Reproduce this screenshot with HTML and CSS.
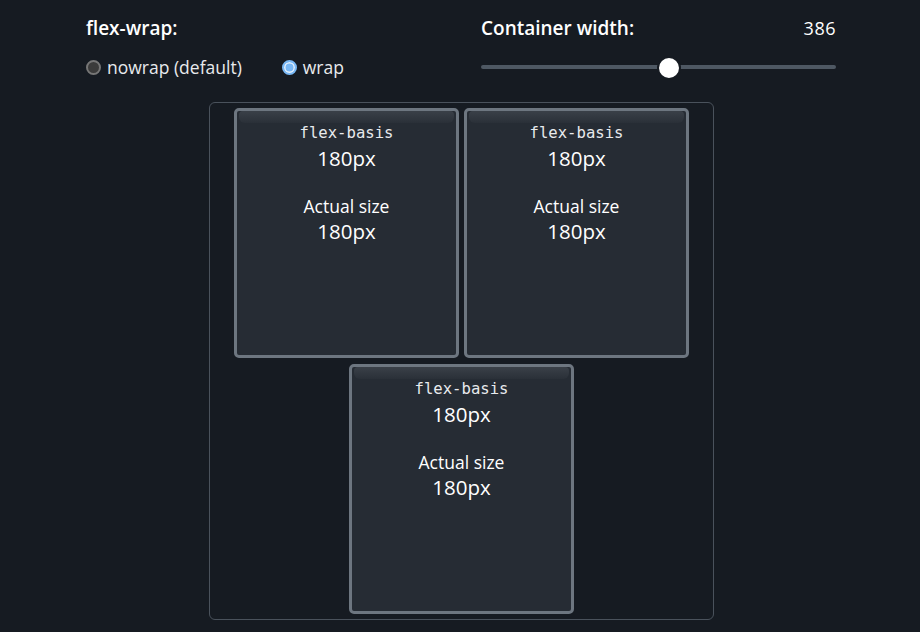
FILE: index.html
```html
<!DOCTYPE html>
<html>
<head>
<meta charset="utf-8">
<link rel="stylesheet" href="styles.css">
</head>
<body>
<div class="page">
  <div class="controls">
    <div class="control">
      <div class="label">flex-wrap:</div>
      <div class="radios">
        <label class="radio"><span class="dot"></span>nowrap (default)</label>
        <label class="radio"><span class="dot checked"></span>wrap</label>
      </div>
    </div>
    <div class="control">
      <div class="label-row"><span class="label">Container width:</span><span class="value">386</span></div>
      <div class="slider">
        <div class="track"></div>
        <div class="thumb" style="left: 53%"></div>
      </div>
    </div>
  </div>
  <div class="container">
    <div class="item"><div class="shine"></div>
      <div class="mono">flex-basis</div><div class="num">180px</div>
      <div class="cap">Actual size</div><div class="num second">180px</div>
    </div>
    <div class="item"><div class="shine"></div>
      <div class="mono">flex-basis</div><div class="num">180px</div>
      <div class="cap">Actual size</div><div class="num second">180px</div>
    </div>
    <div class="item"><div class="shine"></div>
      <div class="mono">flex-basis</div><div class="num">180px</div>
      <div class="cap">Actual size</div><div class="num second">180px</div>
    </div>
  </div>
</div>
</body>
</html>
```
FILE: styles.css
```css
html, body {
  margin: 0;
  padding: 0;
  background: #161b22;
  color: #ffffff;
  font-family: "Open Sans", Lato, sans-serif;
}
.page {
  width: 750px;
  margin-left: 86px;
  padding-top: 16px;
}
.controls {
  display: grid;
  grid-template-columns: 1fr 1fr;
  column-gap: 40px;
}
.label {
  font-size: 19px;
  font-weight: 600;
  line-height: 24px;
}
.label-row {
  display: flex;
  justify-content: space-between;
  align-items: center;
}
.value {
  font-size: 18px;
  letter-spacing: 0.5px;
}
.radios {
  display: flex;
  gap: 40px;
  margin-top: 15px;
}
.radio {
  display: flex;
  align-items: center;
  gap: 6px;
  font-size: 17.5px;
  line-height: 24px;
  color: #e8eaed;
}
.dot {
  width: 11px;
  height: 11px;
  border-radius: 50%;
  background: #3b3b3b;
  border: 2px solid #767676;
  box-sizing: content-box;
}
.dot.checked {
  background: #79b8f5;
  border: 2px solid #79b8f5;
  box-shadow: inset 0 0 0 1.5px #e6f1fc;
}
.slider {
  position: relative;
  height: 24px;
  margin-top: 15px;
}
.track {
  position: absolute;
  left: 0;
  right: 0;
  top: 10px;
  height: 4px;
  border-radius: 2px;
  background: #4e5863;
}
.thumb {
  position: absolute;
  top: 1px;
  width: 20px;
  height: 20px;
  margin-left: -12px;
  border-radius: 50%;
  background: #ffffff;
  border: 2px solid #161b22;
}
.container {
  width: 503px;
  margin: 23px 0 0 123px;
  border: 1px solid #4a525c;
  border-radius: 6px;
  padding: 5px 0;
  display: flex;
  flex-wrap: wrap;
  justify-content: center;
  gap: 6px 5px;
}
.item {
  position: relative;
  width: 225px;
  height: 250px;
  box-sizing: border-box;
  border: 3px solid #6d7680;
  border-radius: 5px;
  background: #262c34;
  text-align: center;
  padding-top: 11px;
}
.shine {
  position: absolute;
  left: 2px;
  right: 2px;
  top: 0;
  height: 12px;
  border-radius: 4px 4px 6px 6px;
  background: linear-gradient(#3a4048, #2a3038);
}
.mono {
  position: relative;
  font-family: "DejaVu Sans Mono", monospace;
  font-size: 15.6px;
  line-height: 22px;
  color: #e8eaed;
}
.num {
  position: relative;
  font-size: 20.5px;
  line-height: 28px;
}
.cap {
  position: relative;
  font-size: 17.5px;
  line-height: 24px;
  margin-top: 22px;
}
.num.second {
  margin-top: -1px;
}
```
